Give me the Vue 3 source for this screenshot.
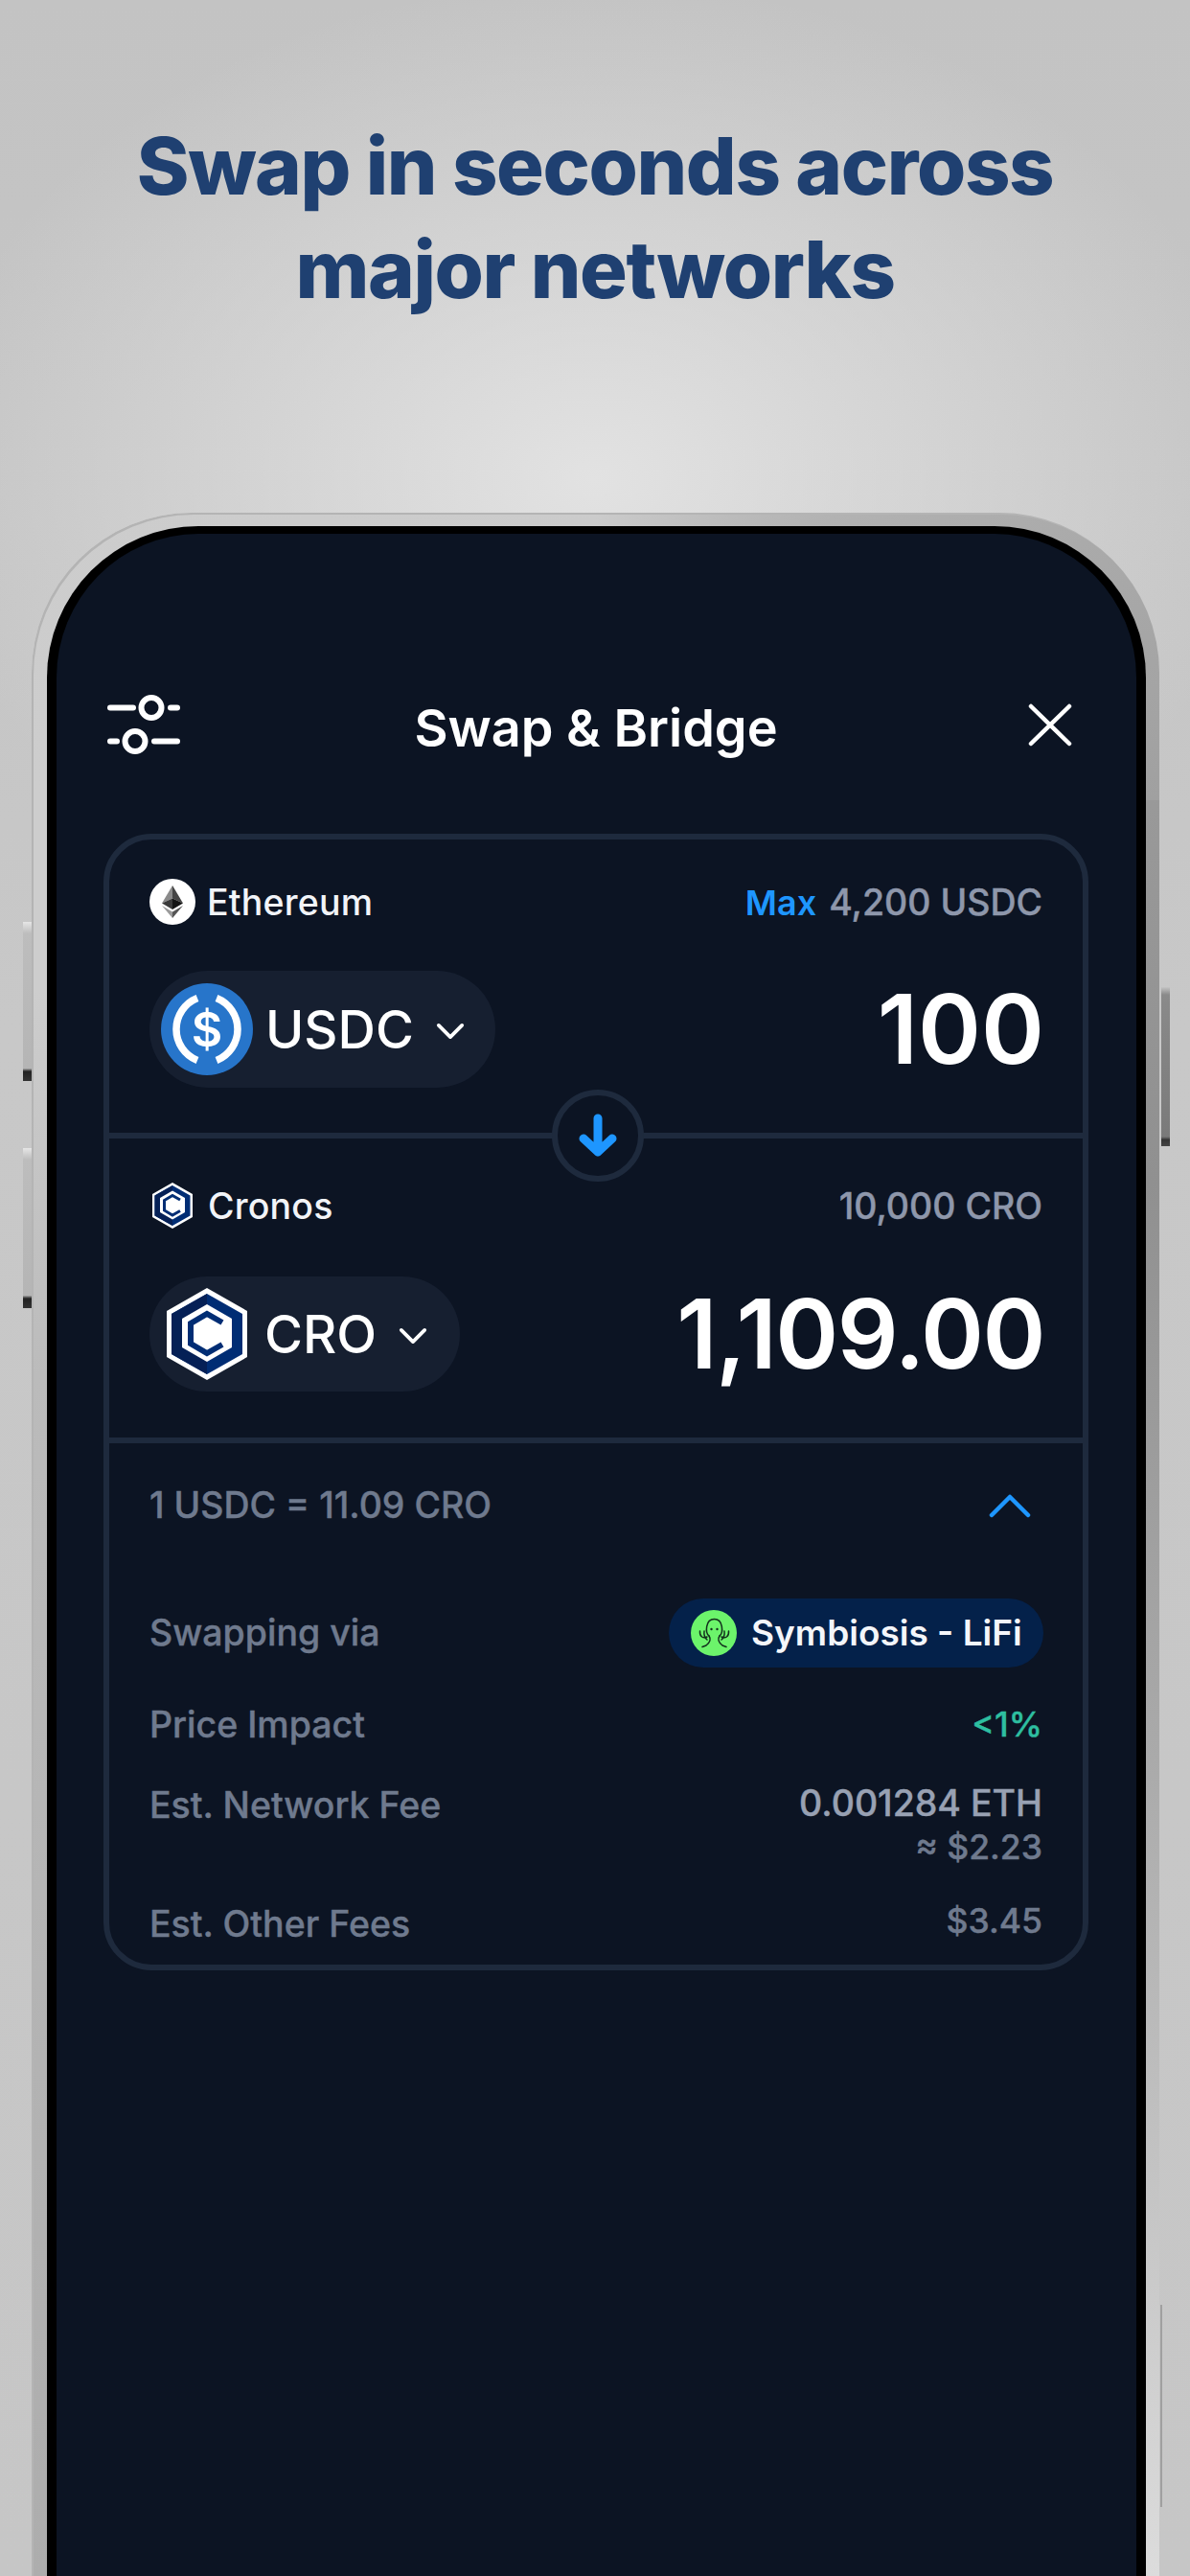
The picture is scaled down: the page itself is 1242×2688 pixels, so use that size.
<script setup>
const details = [
  { label: 'Price Impact', value: '<1%', cls: 'green small' }
]
</script>

<template>
  <div class="page">
    <h1 class="headline">Swap in seconds across<br />major networks</h1>

    <div class="phone">
      <span class="btn btn-l1"></span>
      <span class="btn btn-l2"></span>
      <span class="btn btn-r1"></span>
      <span class="btn-line"></span>
      <div class="bezel">
        <div class="screen">
          <header class="top">
            <svg class="sliders" width="76" height="62" viewBox="0 0 76 62" fill="none" stroke="#fff" stroke-width="6" stroke-linecap="round">
              <path d="M3 13.500H27M66 13.500H73M3 48.500H10M49 48.500H73" />
              <circle cx="46" cy="13.500" r="10.500" />
              <circle cx="29" cy="48.500" r="10.500" />
            </svg>
            <h2 class="title">Swap &amp; Bridge</h2>
            <svg class="close" width="46" height="45" viewBox="0 0 46 45" fill="none" stroke="#fff" stroke-width="4.5" stroke-linecap="round">
              <path d="M3 3L43 42M43 3L3 42" />
            </svg>
          </header>

          <section class="card">
            <div class="block block-a">
              <div class="row net-row">
                <div class="net">
                  <svg width="48" height="48" viewBox="0 0 48 48">
                    <circle cx="24" cy="24" r="24" fill="#fff" />
                    <path d="M24 7L13 25.500L24 20.500Z" fill="#8a8a8a" />
                    <path d="M24 7L35 25.500L24 20.500Z" fill="#454545" />
                    <path d="M13 25.500L24 20.500V32Z" fill="#3a3a3a" />
                    <path d="M35 25.500L24 20.500V32Z" fill="#141414" />
                    <path d="M13 28L24 41V34.500Z" fill="#9a9a9a" />
                    <path d="M35 28L24 41V34.500Z" fill="#555" />
                  </svg>
                  <span>Ethereum</span>
                </div>
                <div class="bal"><b>Max</b> 4,200 USDC</div>
              </div>
              <div class="row token-row">
                <div class="pill pill-usdc">
                  <svg class="tok-usdc" width="96" height="96" viewBox="0 0 96 96">
                    <circle cx="48" cy="48" r="48" fill="#2775ca" />
                    <g fill="none" stroke="#fff" stroke-width="7.500">
                      <path d="M38 15.500A35 35 0 0 0 38 80.500" />
                      <path d="M58 15.500A35 35 0 0 1 58 80.500" />
                    </g>
                    <text x="48" y="65.500" text-anchor="middle" class="dollar">$</text>
                  </svg>
                  <span class="sym">USDC</span>
                  <svg class="chev" width="32" height="20" viewBox="0 0 32 20" fill="none" stroke="#fff" stroke-width="4" stroke-linecap="round" stroke-linejoin="round">
                    <path d="M3 3L16 16L29 3" />
                  </svg>
                </div>
                <div class="amount amount-a">100</div>
              </div>
            </div>

            <div class="divider">
              <div class="flip">
                <svg width="40" height="46" viewBox="0 0 40 46" fill="none" stroke="#1e96ff" stroke-width="9" stroke-linecap="round" stroke-linejoin="round">
                  <path d="M20 5V40M5 26L20 40L35 26" />
                </svg>
              </div>
            </div>

            <div class="block block-b">
              <div class="row net-row">
                <div class="net">
                  <svg class="cro-small" width="42" height="48" viewBox="0 0 84 96">
                    <use href="#cro-logo" />
                  </svg>
                  <span>Cronos</span>
                </div>
                <div class="bal">10,000 CRO</div>
              </div>
              <div class="row token-row">
                <div class="pill pill-cro">
                  <svg class="tok-cro" width="84" height="96" viewBox="0 0 84 96">
                    <defs>
                      <g id="cro-logo">
                        <path d="M42 0L84 24V72L42 96L0 72V24Z" fill="#fff" />
                        <path d="M42 6L79 27V69L42 90L5 69V27Z" fill="#002d74" />
                        <path d="M42 6L5 27V69L42 90Z" fill="#052056" />
                        <path d="M42 17L68 32V62L42 77L16 62V32Z" fill="#fff" />
                        <path d="M58 36L42 27L25 37V58L42 68L58 59" fill="none" stroke="#002d74" stroke-width="6" />
                      </g>
                    </defs>
                    <use href="#cro-logo" />
                  </svg>
                  <span class="sym">CRO</span>
                  <svg class="chev" width="32" height="20" viewBox="0 0 32 20" fill="none" stroke="#fff" stroke-width="4" stroke-linecap="round" stroke-linejoin="round">
                    <path d="M3 3L16 16L29 3" />
                  </svg>
                </div>
                <div class="amount">1,109.00</div>
              </div>
            </div>

            <div class="divider"></div>

            <div class="block block-c">
              <div class="row info rate">
                <span>1 USDC = 11.09 CRO</span>
                <svg class="up" width="44" height="26" viewBox="0 0 44 26" fill="none" stroke="#1e96ff" stroke-width="4.500" stroke-linecap="round" stroke-linejoin="round">
                  <path d="M3 23L22 4L41 23" />
                </svg>
              </div>
              <div class="row info via">
                <span>Swapping via</span>
                <div class="route">
                  <svg width="48" height="48" viewBox="0 0 48 48" fill="none">
                    <circle cx="24" cy="24" r="24" fill="#6cf46b" />
                    <g stroke="#12301c" stroke-width="1.500" stroke-linecap="round" stroke-linejoin="round">
                      <path d="M19 27C15 24 15 9.500 24.500 9.500S34 24 30 27" />
                      <path d="M19 27C21 30 21 33 16 37L12 38.500" />
                      <path d="M30 27C28 30 28 33 33 37L37 38.500" />
                      <path d="M9.500 22C9 28 13 30 17 28" />
                      <path d="M39.500 22C40 28 36 30 32 28" />
                      <path d="M14 22C13.500 26 14.500 29 17 31" />
                      <path d="M35 22C35.500 26 34.500 29 32 31" />
                    </g>
                    <circle cx="21.500" cy="20" r="1.200" fill="#12301c" />
                    <circle cx="27.500" cy="20" r="1.200" fill="#12301c" />
                  </svg>
                  <span>Symbiosis - LiFi</span>
                </div>
              </div>
              <div v-for="d in details" :key="d.label" class="row info impact">
                <span>{{ d.label }}</span>
                <span :class="d.cls">{{ d.value }}</span>
              </div>
              <div class="row info fee">
                <span>Est. Network Fee</span>
                <div class="fee-val">
                  <div class="eth">0.001284 ETH</div>
                  <div class="small">≈ $2.23</div>
                </div>
              </div>
              <div class="row info other">
                <span>Est. Other Fees</span>
                <span class="other-val small">$3.45</span>
              </div>
            </div>
          </section>
        </div>
      </div>
    </div>
  </div>
</template>

<style>
html, body { margin: 0; padding: 0; }
</style>

<style scoped>
.page {
  width: 1242px;
  height: 2688px;
  overflow: hidden;
  box-sizing: border-box;
  padding-top: 119px;
  font-family: Inter, "Noto Sans", sans-serif;
  background:
    radial-gradient(ellipse 700px 520px at 620px 500px, #e2e2e2 0%, rgba(226,226,226,0) 100%),
    linear-gradient(180deg, #c3c3c3 0%, #c8c8c8 40%, #c6c6c6 100%);
  display: flex;
  flex-direction: column;
}
.headline {
  margin: 0;
  text-align: center;
  color: #1f4071;
  font-weight: 800;
  font-size: 83px;
  line-height: 108px;
  letter-spacing: -1.4px;
}
.phone {
  position: relative;
  margin: 200px 0 0 33px;
  width: 1177px;
  flex: 1;
  min-height: 0;
}
.bezel {
  height: 100%;
  box-sizing: border-box;
  padding: 14px 14px 0 16px;
  border-radius: 167px 167px 0 0;
  box-shadow: inset 2px 2px 0 #b4b4b4;
  background:
    conic-gradient(from 270deg at 50% 100%, #cdcdcd 0deg, #cbcbcb 90deg, #b2b2b2 130deg, #a0a0a0 180deg) 0 0 / 100% 300px no-repeat,
    linear-gradient(180deg, #cdcdcd 0, #cdcdcd 500px, #bbb 900px, #adadad 100%) 0 0 / 16px 100% no-repeat,
    linear-gradient(180deg, #a0a0a0 0, #909090 700px, #aaa 1300px, #dcdcdc 100%) 100% 0 / 14px 100% no-repeat;
}
.screen {
  height: 100%;
  box-sizing: border-box;
  border: solid #000;
  border-width: 8px 10px 0;
  border-radius: 158px 158px 0 0;
  background: #0c1423;
  padding: 163px 50px 0 49px;
  color: #fff;
}
.btn {
  position: absolute;
  width: 9px;
  background: linear-gradient(180deg, #e6e6e6 0, #bdbdbd 12px, #b5b5b5 92%, #222 94%, #333 100%);
}
.btn-l1 { left: -9px; top: 427px; height: 166px; }
.btn-l2 { left: -9px; top: 663px; height: 167px; }
.btn-r1 {
  right: -11px;
  top: 495px;
  height: 166px;
  background: linear-gradient(180deg, #c4c4c4 0, #8a8a8a 8px, #7a7a7a 94%, #333 96%, #444 100%);
}
.btn-line {
  position: absolute;
  right: -3px;
  top: 1870px;
  width: 2px;
  height: 211px;
  background: #a0a0a0;
}
.top {
  position: relative;
  display: flex;
  align-items: center;
  justify-content: space-between;
  height: 80px;
  margin-bottom: 70px;
}
.sliders { margin: -9px 0 0 4px; }
.close { margin: -8px 17px 0 0; }
.title {
  position: absolute;
  left: 0;
  right: 0;
  margin: 0;
  text-align: center;
  font-size: 54px;
  font-weight: 600;
  line-height: 80px;
}
.card {
  width: 1028px;
  box-sizing: border-box;
  border: 6px solid #1e2a3d;
  border-radius: 50px;
}
.row {
  display: flex;
  align-items: center;
  justify-content: space-between;
}
.block { padding: 0 42px 0 42px; }
.block-a { padding-top: 40px; padding-bottom: 47px; }
.block-b { padding-top: 45px; padding-bottom: 48px; }
.block-c { padding-top: 40px; padding-bottom: 17px; }
.net-row { height: 50px; }
.block-a .token-row { margin-top: 47px; }
.block-b .token-row { margin-top: 49px; }
.net {
  display: flex;
  align-items: center;
  gap: 12px;
  font-size: 37.500px;
  font-weight: 500;
  letter-spacing: 0.2px;
  color: #f2f4f8;
}
.cro-small { margin: 0 4px 0 3px; }
.bal {
  font-size: 37.500px;
  font-weight: 500;
  -webkit-text-stroke: 0.4px currentColor;
  color: #8e97ab;
}
.bal b { color: #1e96ff; font-weight: 600; font-size: 36px; margin-right: 3px; -webkit-text-stroke: 0; }
.pill {
  display: flex;
  align-items: center;
  border-radius: 61px;
  background: #161f30;
  box-sizing: border-box;
}
.pill-usdc { width: 361px; height: 122px; padding-left: 12px; }
.pill-cro { width: 324px; height: 120px; padding-left: 18px; }
.tok-usdc { margin-right: 13px; }
.tok-cro { margin-right: 18px; }
.sym { font-size: 54.500px; font-weight: 500; line-height: 1; }
.chev { margin: 4px 0 0 23px; width: 30px; height: 19px; }
.dollar { font-family: Inter, sans-serif; font-size: 50px; font-weight: 600; fill: #fff; }
.amount {
  font-size: 100px;
  font-weight: 600;
  line-height: 1;
  letter-spacing: -1.500px;
  margin-right: -2px;
  color: #fff;
}
.amount-a { letter-spacing: 0; }
.divider {
  position: relative;
  height: 6px;
  background: #1e2a3d;
}
.flip {
  position: absolute;
  left: 462px;
  top: -45px;
  width: 96px;
  height: 96px;
  box-sizing: border-box;
  border: 6px solid #1e2a3d;
  border-radius: 50%;
  background: #0c1423;
  display: flex;
  align-items: center;
  justify-content: center;
}
.info {
  font-size: 37.500px;
  font-weight: 500;
  -webkit-text-stroke: 0.4px currentColor;
  line-height: 50px;
  color: #6f7a8e;
}
.small { font-size: 35.500px; }
.up { margin-right: 12px; }
.via { margin-top: 72px; }
.route {
  display: flex;
  align-items: center;
  gap: 15px;
  box-sizing: border-box;
  width: 391px;
  height: 72px;
  margin-right: -1px;
  padding-left: 23px;
  border-radius: 36px;
  background: #04214a;
  color: #f4f6fa;
  font-weight: 600;
  font-size: 37px;
  -webkit-text-stroke: 0;
}
.impact { margin-top: 35px; }
.green { color: #2ebfa0; }
.fee { margin-top: 34px; align-items: flex-start; }
.fee-val { text-align: right; line-height: 46px; }
.eth { color: #98a1b3; }
.other { margin-top: 32px; align-items: flex-start; }
.other-val { line-height: 44px; }
</style>
